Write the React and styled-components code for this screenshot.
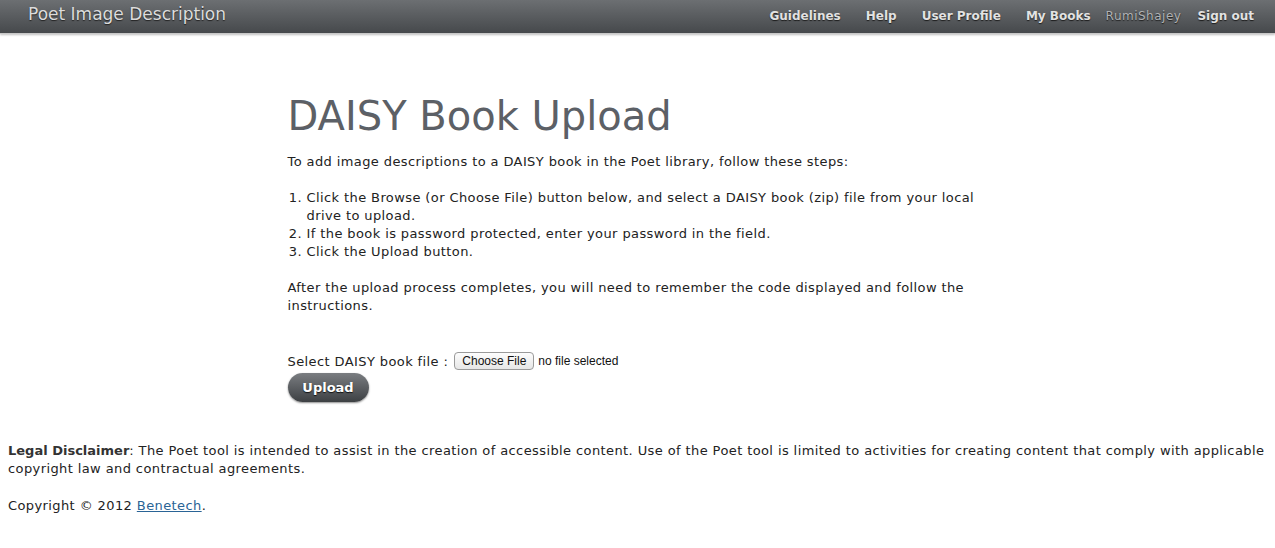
import styled, { createGlobalStyle } from "styled-components";

const Global = createGlobalStyle`
body {
    margin: 0;
    background: #fff;
    font-family: "DejaVu Sans", Verdana, sans-serif;
    font-size: 13px;
    letter-spacing: 0.4px;
    color: #222;
}
`;

const Header = styled.header`
display: flex;
align-items: center;
justify-content: space-between;
height: 33px;
padding: 0 21px 0 28px;
background: linear-gradient(#6c6f72, #46494c);
border-bottom: 1px solid #c8c8c8;
box-shadow: 0 1px 2px rgba(0,0,0,0.25);
letter-spacing: 0;
`;

const Brand = styled.a`
margin-bottom: 5px;
color: #dcdcdc;
font-size: 17px;
text-decoration: none;
text-shadow: 0 1px 1px #222;
`;

const Menu = styled.nav`
display: flex;
align-items: center;
margin-bottom: 2px;
`;

const MenuLink = styled.a`
color: ${p => (p.$muted ? "#b0b2b4" : "#e2e2e2")};
font-size: 12px;
font-weight: ${p => (p.$muted ? "normal" : "bold")};
letter-spacing: ${p => (p.$muted ? "0.5px" : "0")};
text-decoration: none;
text-shadow: 0 1px 1px #1c1c1c;
margin-left: ${p => p.$gap || 25}px;
`;

const Main = styled.main`
width: 700px;
margin: 0 auto;
padding-top: 58px;
`;

const Title = styled.h1`
margin: 0 0 13px;
font-size: 40px;
font-weight: normal;
letter-spacing: 0;
color: #5c6066;
line-height: 48px;
`;

const Para = styled.p`
margin: 0 0 18px;
line-height: 18px;
`;

const Steps = styled.ol`
margin: 0 0 18px;
padding-left: 19px;
width: 680px;
line-height: 18px;
`;

const Form = styled.form`
margin-top: 36px;
`;

const Field = styled.div`
display: flex;
align-items: center;
height: 20px;
`;

const FileButton = styled.button`
margin-left: 6px;
padding: 1px 7px;
font-family: "Liberation Sans", Arial, sans-serif;
font-size: 12px;
letter-spacing: 0;
color: #111;
background: linear-gradient(#fdfdfd, #e6e6e6);
border: 1px solid #9a9a9a;
border-radius: 4px;
`;

const FileNote = styled.span`
margin-left: 4px;
font-family: "Liberation Sans", Arial, sans-serif;
font-size: 12px;
letter-spacing: 0;
color: #111;
`;

const UploadButton = styled.button`
margin-top: 2px;
width: 81px;
height: 29px;
border: none;
border-radius: 15px;
background: linear-gradient(#7a7d81, #3d4043);
box-shadow: 0 1px 2px rgba(0,0,0,0.45);
color: #fff;
font-family: "DejaVu Sans", Verdana, sans-serif;
font-size: 13px;
font-weight: bold;
text-shadow: 0 1px 1px #111;
`;

const Footer = styled.footer`
padding: 40px 8px 0;
`;

const Legal = styled.p`
margin: 0 0 19px;
line-height: 18px;
b {
    color: #333;
    letter-spacing: 0;
}
`;

const Copy = styled.p`
margin: 0;
line-height: 18px;
a {
    color: #2a6496;
}
`;

export default function App() {
    return (
        <>
            <Global />
            <Header>
                <Brand href="#">Poet Image Description</Brand>
                <Menu>
                    <MenuLink href="#">Guidelines</MenuLink>
                    <MenuLink href="#">Help</MenuLink>
                    <MenuLink href="#">User Profile</MenuLink>
                    <MenuLink href="#">My Books</MenuLink>
                    <MenuLink href="#" $muted $gap={15}>RumiShajey</MenuLink>
                    <MenuLink href="#" $gap={16}>Sign out</MenuLink>
                </Menu>
            </Header>
            <Main>
                <Title>DAISY Book Upload</Title>
                <Para>To add image descriptions to a DAISY book in the Poet library, follow these steps:</Para>
                <Steps>
                    <li>Click the Browse (or Choose File) button below, and select a DAISY book (zip) file from your local drive to upload.</li>
                    <li>If the book is password protected, enter your password in the field.</li>
                    <li>Click the Upload button.</li>
                </Steps>
                <Para>After the upload process completes, you will need to remember the code displayed and follow the instructions.</Para>
                <Form onSubmit={e => e.preventDefault()}>
                    <Field>
                        Select DAISY book file :
                        <FileButton type="button">Choose File</FileButton>
                        <FileNote>no file selected</FileNote>
                    </Field>
                    <UploadButton type="submit">Upload</UploadButton>
                </Form>
            </Main>
            <Footer>
                <Legal>
                    <b>Legal Disclaimer</b>: The Poet tool is intended to assist in the creation of accessible content. Use of the Poet tool is limited to activities for creating content that comply with applicable copyright law and contractual agreements.
                </Legal>
                <Copy>Copyright © 2012 <a href="#">Benetech</a>.</Copy>
            </Footer>
        </>
    );
}
